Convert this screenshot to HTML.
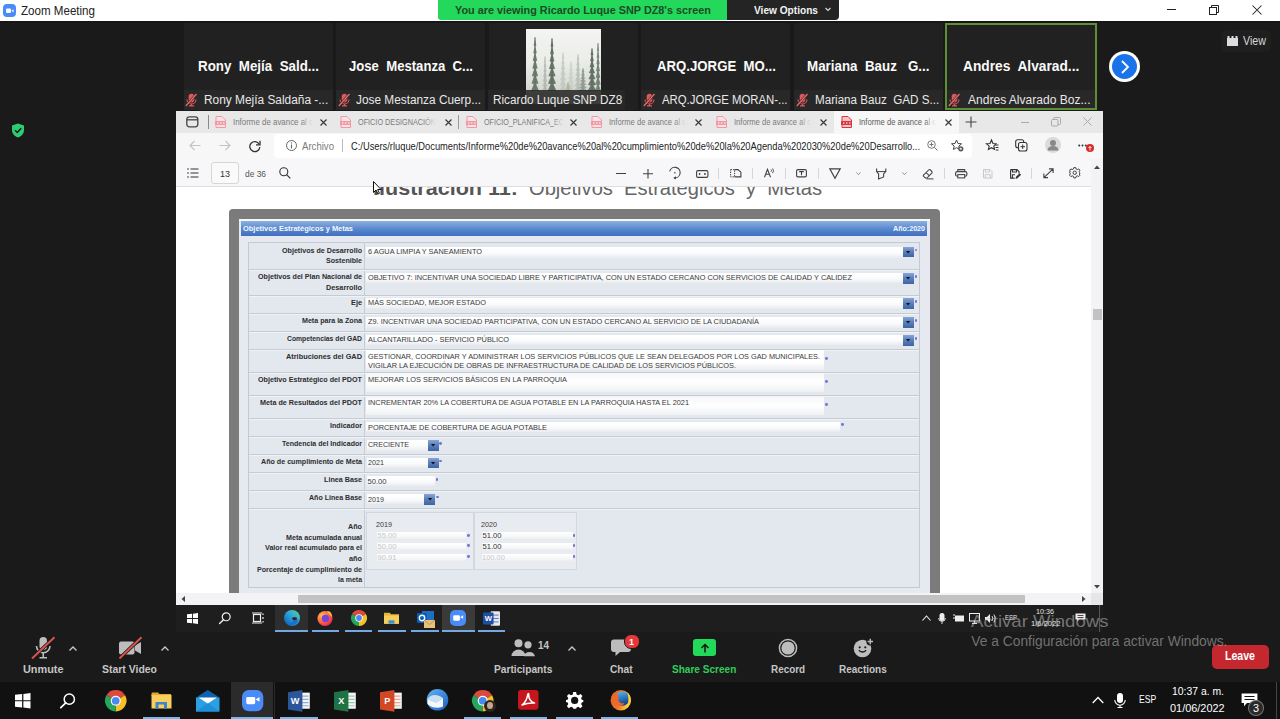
<!DOCTYPE html>
<html><head><meta charset="utf-8"><title>Zoom Meeting</title>
<style>
*{margin:0;padding:0;box-sizing:border-box}
html,body{width:1280px;height:719px;overflow:hidden;background:#1a1a1a;font-family:"Liberation Sans",sans-serif;position:relative}
.a{position:absolute}
.t{position:absolute;white-space:pre;transform-origin:0 0}
svg.a{overflow:visible}
</style></head><body>
<div class="a" style="left:0px;top:0px;width:1280px;height:21px;background:#ffffff;"></div>
<div class="a" style="left:3px;top:4px;width:13px;height:13px;background:#4a8cf7;border-radius:4px"></div>
<svg class="a" style="left:3px;top:4px;" width="13" height="13" viewBox="0 0 13 13"><rect x="3" y="4.5" width="5" height="4.5" rx="1" fill="#fff"/><path d="M8.5 6.8 L10.5 5.2 V8.4 Z" fill="#fff"/></svg>
<div class="t" style="left:21.00px;top:3.99px;font-size:13px;line-height:13px;color:#222;transform:scaleX(0.8906);">Zoom Meeting</div>
<div class="a" style="left:1166.5px;top:9.3px;width:9.5px;height:1px;background:#222;"></div>
<svg class="a" style="left:1208.5px;top:4.5px;" width="10" height="10" viewBox="0 0 10 10"><rect x="0.5" y="2.5" width="7" height="7" fill="none" stroke="#222" stroke-width="1"/><path d="M2.5 2.5 V0.5 H9.5 V7.5 H7.5" fill="none" stroke="#222" stroke-width="1"/></svg>
<svg class="a" style="left:1251.5px;top:4.5px;" width="10" height="10" viewBox="0 0 10 10"><path d="M0.5 0.5 L9.5 9.5 M9.5 0.5 L0.5 9.5" stroke="#222" stroke-width="1.05"/></svg>
<div class="a" style="left:438px;top:0px;width:289px;height:20px;background:#23d85a;border-bottom-left-radius:3px"></div>
<div class="a" style="left:727px;top:0px;width:112px;height:20px;background:#242424;border-bottom-right-radius:4px"></div>
<div class="t" style="left:455.00px;top:5.06px;font-size:11.5px;line-height:11.5px;color:#1d4a27;font-weight:bold;transform:scaleX(0.9433);">You are viewing Ricardo Luque SNP DZ8's screen</div>
<div class="t" style="left:754.00px;top:5.06px;font-size:11.5px;line-height:11.5px;color:#f2f2f2;font-weight:bold;transform:scaleX(0.8810);">View Options</div>
<svg class="a" style="left:825px;top:7px;" width="6" height="5" viewBox="0 0 6 5"><path d="M0.5 1 L3 3.5 L5.5 1" fill="none" stroke="#ddd" stroke-width="1.1"/></svg>
<div class="a" style="left:0px;top:21px;width:1280px;height:2px;background:#161616;"></div>
<div class="a" style="left:184px;top:23px;width:149px;height:87px;background:#212121;"></div>
<div class="t" style="left:197.60px;top:58.72px;font-size:14.5px;line-height:14.5px;color:#fafafa;font-weight:bold;transform:scaleX(0.9212);">Rony  Mejía  Sald...</div>
<div class="a" style="left:184px;top:90px;width:149px;height:19.6px;background:#282828;"></div>
<svg class="a" style="left:185.4px;top:92.5px;" width="13" height="14" viewBox="0 0 13 14"><rect x="3.7" y="0.8" width="5.6" height="8.6" rx="2.8" fill="#e0585a"/><path d="M2 6.5 a4.5 4.5 0 0 0 9 0" fill="none" stroke="#e0585a" stroke-width="1.1"/><path d="M6.5 11 V12.6 M4 12.8 H9" stroke="#e0585a" stroke-width="1.2"/><path d="M0.8 13 L11.5 1" stroke="#282828" stroke-width="2.4"/><path d="M0.8 13 L11.5 1" stroke="#e8706e" stroke-width="1.2"/></svg>
<div class="t" style="left:203.80px;top:94.42px;font-size:12.5px;line-height:12.5px;color:#e8e8e8;transform:scaleX(0.9508);">Rony Mejía Saldaña -...</div>
<div class="a" style="left:336px;top:23px;width:149px;height:87px;background:#212121;"></div>
<div class="t" style="left:348.70px;top:58.72px;font-size:14.5px;line-height:14.5px;color:#fafafa;font-weight:bold;transform:scaleX(0.9051);">Jose  Mestanza  C...</div>
<div class="a" style="left:336px;top:90px;width:149px;height:19.6px;background:#282828;"></div>
<svg class="a" style="left:338.0px;top:92.5px;" width="13" height="14" viewBox="0 0 13 14"><rect x="3.7" y="0.8" width="5.6" height="8.6" rx="2.8" fill="#e0585a"/><path d="M2 6.5 a4.5 4.5 0 0 0 9 0" fill="none" stroke="#e0585a" stroke-width="1.1"/><path d="M6.5 11 V12.6 M4 12.8 H9" stroke="#e0585a" stroke-width="1.2"/><path d="M0.8 13 L11.5 1" stroke="#282828" stroke-width="2.4"/><path d="M0.8 13 L11.5 1" stroke="#e8706e" stroke-width="1.2"/></svg>
<div class="t" style="left:356.20px;top:94.42px;font-size:12.5px;line-height:12.5px;color:#e8e8e8;transform:scaleX(0.9469);">Jose Mestanza Cuerp...</div>
<div class="a" style="left:489px;top:23px;width:149px;height:87px;background:#212121;"></div>
<div class="a" style="left:641px;top:23px;width:149px;height:87px;background:#212121;"></div>
<div class="t" style="left:656.50px;top:58.72px;font-size:14.5px;line-height:14.5px;color:#fafafa;font-weight:bold;transform:scaleX(0.9102);">ARQ.JORGE  MO...</div>
<div class="a" style="left:641px;top:90px;width:149px;height:19.6px;background:#282828;"></div>
<svg class="a" style="left:643.1999999999999px;top:92.5px;" width="13" height="14" viewBox="0 0 13 14"><rect x="3.7" y="0.8" width="5.6" height="8.6" rx="2.8" fill="#e0585a"/><path d="M2 6.5 a4.5 4.5 0 0 0 9 0" fill="none" stroke="#e0585a" stroke-width="1.1"/><path d="M6.5 11 V12.6 M4 12.8 H9" stroke="#e0585a" stroke-width="1.2"/><path d="M0.8 13 L11.5 1" stroke="#282828" stroke-width="2.4"/><path d="M0.8 13 L11.5 1" stroke="#e8706e" stroke-width="1.2"/></svg>
<div class="t" style="left:662.00px;top:94.42px;font-size:12.5px;line-height:12.5px;color:#e8e8e8;transform:scaleX(0.9081);">ARQ.JORGE MORAN-...</div>
<div class="a" style="left:794px;top:23px;width:149px;height:87px;background:#212121;"></div>
<div class="t" style="left:807.25px;top:58.72px;font-size:14.5px;line-height:14.5px;color:#fafafa;font-weight:bold;transform:scaleX(0.9214);">Mariana  Bauz   G...</div>
<div class="a" style="left:794px;top:90px;width:149px;height:19.6px;background:#282828;"></div>
<svg class="a" style="left:795.8px;top:92.5px;" width="13" height="14" viewBox="0 0 13 14"><rect x="3.7" y="0.8" width="5.6" height="8.6" rx="2.8" fill="#e0585a"/><path d="M2 6.5 a4.5 4.5 0 0 0 9 0" fill="none" stroke="#e0585a" stroke-width="1.1"/><path d="M6.5 11 V12.6 M4 12.8 H9" stroke="#e0585a" stroke-width="1.2"/><path d="M0.8 13 L11.5 1" stroke="#282828" stroke-width="2.4"/><path d="M0.8 13 L11.5 1" stroke="#e8706e" stroke-width="1.2"/></svg>
<div class="t" style="left:814.50px;top:94.42px;font-size:12.5px;line-height:12.5px;color:#e8e8e8;transform:scaleX(0.9311);">Mariana Bauz  GAD S...</div>
<div class="a" style="left:947px;top:23px;width:149px;height:87px;background:#212121;"></div>
<div class="t" style="left:962.95px;top:58.72px;font-size:14.5px;line-height:14.5px;color:#fafafa;font-weight:bold;transform:scaleX(0.9473);">Andres  Alvarad...</div>
<div class="a" style="left:947px;top:90px;width:149px;height:19.6px;background:#282828;"></div>
<svg class="a" style="left:948.4px;top:92.5px;" width="13" height="14" viewBox="0 0 13 14"><rect x="3.7" y="0.8" width="5.6" height="8.6" rx="2.8" fill="#e0585a"/><path d="M2 6.5 a4.5 4.5 0 0 0 9 0" fill="none" stroke="#e0585a" stroke-width="1.1"/><path d="M6.5 11 V12.6 M4 12.8 H9" stroke="#e0585a" stroke-width="1.2"/><path d="M0.8 13 L11.5 1" stroke="#282828" stroke-width="2.4"/><path d="M0.8 13 L11.5 1" stroke="#e8706e" stroke-width="1.2"/></svg>
<div class="t" style="left:967.50px;top:94.42px;font-size:12.5px;line-height:12.5px;color:#e8e8e8;transform:scaleX(0.9634);">Andres Alvarado Boz...</div>
<div class="a" style="left:526px;top:29px;width:75px;height:75px;background:linear-gradient(180deg,#f4f4f2 0%,#eceeea 40%,#d9ddd6 75%,#b9c0b5 100%);overflow:hidden"><svg width="75" height="75" viewBox="0 0 75 75"><path d="M9.0 9.0 L9.8 9.0 L9.3 9.6 L10.3 16.6 L9.4 17.2 L10.7 24.1 L9.6 24.7 L11.2 31.7 L9.8 32.3 L11.6 39.3 L9.9 39.9 L12.1 46.9 L10.1 47.5 L12.5 54.4 L10.2 55.0 L13.0 62.0 L10.4 62.6 L13.0 62 L5.0 62 L7.6 62.6 L5.0 62.0 L7.8 55.0 L5.5 54.4 L7.9 47.5 L5.9 46.9 L8.1 39.9 L6.4 39.3 L8.2 32.3 L6.8 31.7 L8.4 24.7 L7.3 24.1 L8.6 17.2 L7.7 16.6 L8.7 9.6 L8.2 9.0 Z" fill="#5d6d5e" opacity="0.85"/><path d="M9.0 8.0 V62" stroke="#5d6d5e" stroke-width="0.9" opacity="0.85"/><path d="M26.0 10.0 L26.9 10.0 L26.3 10.6 L27.4 17.4 L26.5 18.0 L27.9 24.9 L26.7 25.5 L28.4 32.3 L26.9 32.9 L29.0 39.7 L27.0 40.3 L29.5 47.1 L27.2 47.7 L30.0 54.6 L27.4 55.2 L30.5 62.0 L27.6 62.6 L30.5 62 L21.5 62 L24.4 62.6 L21.5 62.0 L24.6 55.2 L22.0 54.6 L24.8 47.7 L22.5 47.1 L25.0 40.3 L23.0 39.7 L25.1 32.9 L23.6 32.3 L25.3 25.5 L24.1 24.9 L25.5 18.0 L24.6 17.4 L25.7 10.6 L25.1 10.0 Z" fill="#566657" opacity="0.85"/><path d="M26.0 9.0 V62" stroke="#566657" stroke-width="0.9" opacity="0.85"/><path d="M19.0 28.0 L19.6 28.0 L19.2 28.6 L19.9 32.9 L19.3 33.5 L20.3 37.7 L19.4 38.3 L20.6 42.6 L19.6 43.2 L21.0 47.4 L19.7 48.0 L21.3 52.3 L19.8 52.9 L21.7 57.1 L19.9 57.7 L22.0 62.0 L20.1 62.6 L22.0 62 L16.0 62 L17.9 62.6 L16.0 62.0 L18.1 57.7 L16.3 57.1 L18.2 52.9 L16.7 52.3 L18.3 48.0 L17.0 47.4 L18.4 43.2 L17.4 42.6 L18.6 38.3 L17.7 37.7 L18.7 33.5 L18.1 32.9 L18.8 28.6 L18.4 28.0 Z" fill="#9aa59a" opacity="0.50"/><path d="M19.0 27.0 V62" stroke="#9aa59a" stroke-width="0.9" opacity="0.50"/><path d="M37.0 24.0 L37.8 24.0 L37.3 24.6 L38.3 29.4 L37.4 30.0 L38.7 34.9 L37.6 35.5 L39.2 40.3 L37.8 40.9 L39.6 45.7 L37.9 46.3 L40.1 51.1 L38.1 51.7 L40.5 56.6 L38.2 57.2 L41.0 62.0 L38.4 62.6 L41.0 62 L33.0 62 L35.6 62.6 L33.0 62.0 L35.8 57.2 L33.5 56.6 L35.9 51.7 L33.9 51.1 L36.1 46.3 L34.4 45.7 L36.2 40.9 L34.8 40.3 L36.4 35.5 L35.3 34.9 L36.6 30.0 L35.7 29.4 L36.7 24.6 L36.2 24.0 Z" fill="#b5bcb4" opacity="0.50"/><path d="M37.0 23.0 V62" stroke="#b5bcb4" stroke-width="0.9" opacity="0.50"/><path d="M45.0 33.0 L45.9 33.0 L45.3 33.6 L46.4 37.1 L45.5 37.7 L46.9 41.3 L45.7 41.9 L47.4 45.4 L45.9 46.0 L48.0 49.6 L46.0 50.2 L48.5 53.7 L46.2 54.3 L49.0 57.9 L46.4 58.5 L49.5 62.0 L46.6 62.6 L49.5 62 L40.5 62 L43.4 62.6 L40.5 62.0 L43.6 58.5 L41.0 57.9 L43.8 54.3 L41.5 53.7 L44.0 50.2 L42.0 49.6 L44.1 46.0 L42.6 45.4 L44.3 41.9 L43.1 41.3 L44.5 37.7 L43.6 37.1 L44.7 33.6 L44.1 33.0 Z" fill="#bfc5be" opacity="0.45"/><path d="M45.0 32.0 V62" stroke="#bfc5be" stroke-width="0.9" opacity="0.45"/><path d="M52.0 26.0 L52.8 26.0 L52.3 26.6 L53.3 31.1 L52.4 31.7 L53.7 36.3 L52.6 36.9 L54.2 41.4 L52.8 42.0 L54.6 46.6 L52.9 47.2 L55.1 51.7 L53.1 52.3 L55.5 56.9 L53.2 57.5 L56.0 62.0 L53.4 62.6 L56.0 62 L48.0 62 L50.6 62.6 L48.0 62.0 L50.8 57.5 L48.5 56.9 L50.9 52.3 L48.9 51.7 L51.1 47.2 L49.4 46.6 L51.2 42.0 L49.8 41.4 L51.4 36.9 L50.3 36.3 L51.6 31.7 L50.7 31.1 L51.7 26.6 L51.2 26.0 Z" fill="#a6aea6" opacity="0.50"/><path d="M52.0 25.0 V62" stroke="#a6aea6" stroke-width="0.9" opacity="0.50"/><path d="M57.0 40.0 L57.9 40.0 L57.3 40.6 L58.4 43.1 L57.5 43.7 L58.9 46.3 L57.7 46.9 L59.4 49.4 L57.9 50.0 L60.0 52.6 L58.0 53.2 L60.5 55.7 L58.2 56.3 L61.0 58.9 L58.4 59.5 L61.5 62.0 L58.6 62.6 L61.5 62 L52.5 62 L55.4 62.6 L52.5 62.0 L55.6 59.5 L53.0 58.9 L55.8 56.3 L53.5 55.7 L56.0 53.2 L54.0 52.6 L56.1 50.0 L54.6 49.4 L56.3 46.9 L55.1 46.3 L56.5 43.7 L55.6 43.1 L56.7 40.6 L56.1 40.0 Z" fill="#7f8c80" opacity="0.70"/><path d="M57.0 39.0 V62" stroke="#7f8c80" stroke-width="0.9" opacity="0.70"/><path d="M66.0 20.0 L66.9 20.0 L66.3 20.6 L67.4 26.0 L66.5 26.6 L67.9 32.0 L66.7 32.6 L68.4 38.0 L66.9 38.6 L69.0 44.0 L67.0 44.6 L69.5 50.0 L67.2 50.6 L70.0 56.0 L67.4 56.6 L70.5 62.0 L67.6 62.6 L70.5 62 L61.5 62 L64.4 62.6 L61.5 62.0 L64.6 56.6 L62.0 56.0 L64.8 50.6 L62.5 50.0 L65.0 44.6 L63.0 44.0 L65.1 38.6 L63.6 38.0 L65.3 32.6 L64.1 32.0 L65.5 26.6 L64.6 26.0 L65.7 20.6 L65.1 20.0 Z" fill="#566657" opacity="0.85"/><path d="M66.0 19.0 V62" stroke="#566657" stroke-width="0.9" opacity="0.85"/><path d="M72.0 15.0 L72.6 15.0 L72.2 15.6 L72.9 21.7 L72.3 22.3 L73.3 28.4 L72.5 29.0 L73.6 35.1 L72.6 35.7 L74.0 41.9 L72.7 42.5 L74.3 48.6 L72.8 49.2 L74.7 55.3 L72.9 55.9 L75.0 62.0 L73.0 62.6 L75.0 62 L69.0 62 L71.0 62.6 L69.0 62.0 L71.1 55.9 L69.3 55.3 L71.2 49.2 L69.7 48.6 L71.3 42.5 L70.0 41.9 L71.4 35.7 L70.4 35.1 L71.5 29.0 L70.7 28.4 L71.7 22.3 L71.1 21.7 L71.8 15.6 L71.4 15.0 Z" fill="#64736a" opacity="0.80"/><path d="M72.0 14.0 V62" stroke="#64736a" stroke-width="0.9" opacity="0.80"/><path d="M42.0 54.0 L42.8 54.0 L42.3 54.6 L43.3 55.1 L42.4 55.7 L43.7 56.3 L42.6 56.9 L44.2 57.4 L42.8 58.0 L44.6 58.6 L42.9 59.2 L45.1 59.7 L43.1 60.3 L45.5 60.9 L43.2 61.5 L46.0 62.0 L43.4 62.6 L46.0 62 L38.0 62 L40.6 62.6 L38.0 62.0 L40.8 61.5 L38.5 60.9 L40.9 60.3 L38.9 59.7 L41.1 59.2 L39.4 58.6 L41.2 58.0 L39.8 57.4 L41.4 56.9 L40.3 56.3 L41.6 55.7 L40.7 55.1 L41.7 54.6 L41.2 54.0 Z" fill="#9a9f80" opacity="0.50"/><path d="M42.0 53.0 V62" stroke="#9a9f80" stroke-width="0.9" opacity="0.50"/></svg></div>
<div class="a" style="left:488.4px;top:90px;width:137.1px;height:19.6px;background:rgba(40,40,40,0.88);"></div>
<div class="t" style="left:492.70px;top:94.42px;font-size:12.5px;line-height:12.5px;color:#e8e8e8;transform:scaleX(0.9407);">Ricardo Luque SNP DZ8</div>
<div class="a" style="left:945px;top:23px;width:152px;height:86.6px;background:transparent;border:2px solid #5f8f35"></div>
<div class="a" style="left:1109px;top:51px;width:31px;height:31px;border-radius:50%;background:#fff"></div>
<div class="a" style="left:1112px;top:54px;width:25px;height:25px;border-radius:50%;background:#1a73e8"></div>
<svg class="a" style="left:1119px;top:59px;" width="12" height="16" viewBox="0 0 12 16"><path d="M3 2 L9 8 L3 14" fill="none" stroke="#fff" stroke-width="1.8"/></svg>
<div class="a" style="left:1221px;top:30px;width:50px;height:22px;background:#1f1f1f;border-radius:6px"></div>
<svg class="a" style="left:1227px;top:36px;" width="11" height="10" viewBox="0 0 11 10"><rect x="0" y="2" width="11" height="8" fill="#ddd"/><rect x="0.5" y="0" width="2" height="2" fill="#ddd"/><rect x="4.5" y="0" width="2" height="2" fill="#ddd"/><rect x="8.5" y="0" width="2" height="2" fill="#ddd"/></svg>
<div class="t" style="left:1242.50px;top:35.34px;font-size:12px;line-height:12px;color:#d6d6d6;transform:scaleX(0.8916);">View</div>
<svg class="a" style="left:11px;top:123px;" width="14" height="15" viewBox="0 0 14 15"><path d="M7 0.5 L13 2.5 V7 C13 11 10 13.5 7 14.5 C4 13.5 1 11 1 7 V2.5 Z" fill="#2ecc71"/><path d="M4 7.3 L6.3 9.5 L10.2 5.2" fill="none" stroke="#1a1a1a" stroke-width="1.5"/></svg>
<div class="a" style="left:176px;top:111px;width:927px;height:494px;background:#ffffff;"></div>
<div class="a" style="left:176px;top:111px;width:927px;height:22px;background:#e8e8e9;"></div>
<svg class="a" style="left:186px;top:116px;" width="13" height="12" viewBox="0 0 13 12"><rect x="0.8" y="0.8" width="11" height="10" rx="2.5" fill="none" stroke="#444" stroke-width="1.3"/><path d="M1 3.8 H12" stroke="#444" stroke-width="1.3"/></svg>
<div class="a" style="left:208px;top:115px;width:1px;height:14px;background:#8a8a8a;"></div>
<svg class="a" style="left:215px;top:116px;" width="11" height="12" viewBox="0 0 11 12"><path d="M1 0.5 H7 L10.5 4 V11.5 H1 Z" fill="#fbe3e6" stroke="#ef9aa5" stroke-width="1"/><rect x="0" y="5" width="11" height="4" fill="#ef9aa5"/><path d="M2 7 h1.5 M5 7 h1.5 M8 7 h1.5" stroke="#fff" stroke-width="1"/></svg>
<div class="t" style="left:233.00px;top:116.96px;font-size:9.5px;line-height:9.5px;color:#7a7a7a;transform:scaleX(0.8324);">Informe de avance al c</div>
<div class="a" style="left:301px;top:116px;width:12px;height:12px;background:linear-gradient(90deg,rgba(232,232,233,0),#e8e8e9);"></div>
<svg class="a" style="left:320px;top:119px;" width="7" height="7" viewBox="0 0 7 7"><path d="M0.5 0.5 L6.5 6.5 M6.5 0.5 L0.5 6.5" stroke="#3a3a3a" stroke-width="1.2"/></svg>
<svg class="a" style="left:340px;top:116px;" width="11" height="12" viewBox="0 0 11 12"><path d="M1 0.5 H7 L10.5 4 V11.5 H1 Z" fill="#fbe3e6" stroke="#ef9aa5" stroke-width="1"/><rect x="0" y="5" width="11" height="4" fill="#ef9aa5"/><path d="M2 7 h1.5 M5 7 h1.5 M8 7 h1.5" stroke="#fff" stroke-width="1"/></svg>
<div class="t" style="left:358.00px;top:116.96px;font-size:9.5px;line-height:9.5px;color:#7a7a7a;transform:scaleX(0.7656);">OFICIO DESIGNACIÓN</div>
<div class="a" style="left:424px;top:116px;width:12px;height:12px;background:linear-gradient(90deg,rgba(232,232,233,0),#e8e8e9);"></div>
<svg class="a" style="left:445px;top:119px;" width="7" height="7" viewBox="0 0 7 7"><path d="M0.5 0.5 L6.5 6.5 M6.5 0.5 L0.5 6.5" stroke="#3a3a3a" stroke-width="1.2"/></svg>
<svg class="a" style="left:466px;top:116px;" width="11" height="12" viewBox="0 0 11 12"><path d="M1 0.5 H7 L10.5 4 V11.5 H1 Z" fill="#fbe3e6" stroke="#ef9aa5" stroke-width="1"/><rect x="0" y="5" width="11" height="4" fill="#ef9aa5"/><path d="M2 7 h1.5 M5 7 h1.5 M8 7 h1.5" stroke="#fff" stroke-width="1"/></svg>
<div class="t" style="left:484.00px;top:116.96px;font-size:9.5px;line-height:9.5px;color:#7a7a7a;transform:scaleX(0.7576);">OFICIO_PLANIFICA_EC</div>
<div class="a" style="left:552px;top:116px;width:12px;height:12px;background:linear-gradient(90deg,rgba(232,232,233,0),#e8e8e9);"></div>
<svg class="a" style="left:570px;top:119px;" width="7" height="7" viewBox="0 0 7 7"><path d="M0.5 0.5 L6.5 6.5 M6.5 0.5 L0.5 6.5" stroke="#3a3a3a" stroke-width="1.2"/></svg>
<svg class="a" style="left:591px;top:116px;" width="11" height="12" viewBox="0 0 11 12"><path d="M1 0.5 H7 L10.5 4 V11.5 H1 Z" fill="#fbe3e6" stroke="#ef9aa5" stroke-width="1"/><rect x="0" y="5" width="11" height="4" fill="#ef9aa5"/><path d="M2 7 h1.5 M5 7 h1.5 M8 7 h1.5" stroke="#fff" stroke-width="1"/></svg>
<div class="t" style="left:609.00px;top:116.96px;font-size:9.5px;line-height:9.5px;color:#7a7a7a;transform:scaleX(0.8012);">Informe de avance al c</div>
<div class="a" style="left:674px;top:116px;width:12px;height:12px;background:linear-gradient(90deg,rgba(232,232,233,0),#e8e8e9);"></div>
<svg class="a" style="left:695px;top:119px;" width="7" height="7" viewBox="0 0 7 7"><path d="M0.5 0.5 L6.5 6.5 M6.5 0.5 L0.5 6.5" stroke="#3a3a3a" stroke-width="1.2"/></svg>
<svg class="a" style="left:716px;top:116px;" width="11" height="12" viewBox="0 0 11 12"><path d="M1 0.5 H7 L10.5 4 V11.5 H1 Z" fill="#fbe3e6" stroke="#ef9aa5" stroke-width="1"/><rect x="0" y="5" width="11" height="4" fill="#ef9aa5"/><path d="M2 7 h1.5 M5 7 h1.5 M8 7 h1.5" stroke="#fff" stroke-width="1"/></svg>
<div class="t" style="left:734.00px;top:116.96px;font-size:9.5px;line-height:9.5px;color:#7a7a7a;transform:scaleX(0.8012);">Informe de avance al c</div>
<div class="a" style="left:799px;top:116px;width:12px;height:12px;background:linear-gradient(90deg,rgba(232,232,233,0),#e8e8e9);"></div>
<svg class="a" style="left:820px;top:119px;" width="7" height="7" viewBox="0 0 7 7"><path d="M0.5 0.5 L6.5 6.5 M6.5 0.5 L0.5 6.5" stroke="#3a3a3a" stroke-width="1.2"/></svg>
<div class="a" style="left:458px;top:115px;width:1px;height:14px;background:#9a9a9a;"></div>
<div class="a" style="left:834px;top:111px;width:125px;height:22px;background:#f7f7f7;"></div>
<svg class="a" style="left:841px;top:116px;" width="11" height="12" viewBox="0 0 11 12"><path d="M1 0.5 H7 L10.5 4 V11.5 H1 Z" fill="#f6c5c9" stroke="#d9363e" stroke-width="1"/><rect x="0" y="5" width="11" height="4" fill="#d9363e"/><path d="M2 7 h1.5 M5 7 h1.5 M8 7 h1.5" stroke="#fff" stroke-width="1"/></svg>
<div class="t" style="left:859.00px;top:116.96px;font-size:9.5px;line-height:9.5px;color:#5a5a5a;transform:scaleX(0.8012);">Informe de avance al c</div>
<div class="a" style="left:924px;top:116px;width:12px;height:12px;background:linear-gradient(90deg,rgba(247,247,247,0),#f7f7f7);"></div>
<svg class="a" style="left:945px;top:119px;" width="7" height="7" viewBox="0 0 7 7"><path d="M0.5 0.5 L6.5 6.5 M6.5 0.5 L0.5 6.5" stroke="#3a3a3a" stroke-width="1.2"/></svg>
<svg class="a" style="left:965px;top:116px;" width="12" height="12" viewBox="0 0 12 12"><path d="M6 0.5 V11.5 M0.5 6 H11.5" stroke="#444" stroke-width="1.1"/></svg>
<div class="a" style="left:1021px;top:122px;width:8px;height:1px;background:#aaa;"></div>
<svg class="a" style="left:1051px;top:117px;" width="10" height="10" viewBox="0 0 10 10"><rect x="0.5" y="2.5" width="6.5" height="6.5" rx="1" fill="none" stroke="#aaa"/><path d="M2.5 2.5 V1.5 a1 1 0 0 1 1 -1 H8.5 a1 1 0 0 1 1 1 V6.5 a1 1 0 0 1 -1 1 H7" fill="none" stroke="#aaa"/></svg>
<svg class="a" style="left:1083px;top:117px;" width="9" height="9" viewBox="0 0 9 9"><path d="M0.5 0.5 L8.5 8.5 M8.5 0.5 L0.5 8.5" stroke="#aaa" stroke-width="1"/></svg>
<div class="a" style="left:176px;top:133px;width:927px;height:26px;background:#f7f7f7;"></div>
<svg class="a" style="left:189px;top:140px;" width="12" height="11" viewBox="0 0 12 11"><path d="M11.5 5.5 H1 M5.5 1 L1 5.5 L5.5 10" fill="none" stroke="#c4c4c4" stroke-width="1.1"/></svg>
<svg class="a" style="left:219px;top:140px;" width="12" height="11" viewBox="0 0 12 11"><path d="M0.5 5.5 H11 M6.5 1 L11 5.5 L6.5 10" fill="none" stroke="#c4c4c4" stroke-width="1.1"/></svg>
<svg class="a" style="left:249px;top:140px;" width="12" height="12" viewBox="0 0 12 12"><path d="M10.2 4.2 A5 5 0 1 0 10.8 7" fill="none" stroke="#333" stroke-width="1.3"/><path d="M11 0.8 V4.8 H7" fill="none" stroke="#333" stroke-width="1.3"/></svg>
<div class="a" style="left:274px;top:134px;width:698px;height:24px;background:#ffffff;border-radius:4px"></div>
<svg class="a" style="left:286px;top:140px;" width="11" height="11" viewBox="0 0 11 11"><circle cx="5.5" cy="5.5" r="5" fill="none" stroke="#666" stroke-width="1"/><path d="M5.5 4.5 V8.5" stroke="#666" stroke-width="1.1"/><circle cx="5.5" cy="2.9" r="0.7" fill="#666"/></svg>
<div class="t" style="left:302.00px;top:140.61px;font-size:10.5px;line-height:10.5px;color:#7a7a7a;transform:scaleX(0.9139);">Archivo</div>
<div class="a" style="left:342px;top:139px;width:1px;height:13px;background:#bbb;"></div>
<div class="t" style="left:351.00px;top:140.61px;font-size:10.5px;line-height:10.5px;color:#222;transform:scaleX(0.8878);">C:/Users/rluque/Documents/Informe%20de%20avance%20al%20cumplimiento%20de%20la%20Agenda%202030%20de%20Desarrollo...</div>
<svg class="a" style="left:927px;top:140px;" width="11" height="11" viewBox="0 0 11 11"><circle cx="4.5" cy="4.5" r="3.8" fill="none" stroke="#777" stroke-width="1"/><path d="M7.3 7.3 L10.5 10.5 M4.5 2.5 V6.5 M2.5 4.5 H6.5" stroke="#777" stroke-width="1"/></svg>
<svg class="a" style="left:951px;top:139px;" width="13" height="13" viewBox="0 0 13 13"><path d="M5.5 1 L7 4.5 L10.5 4.8 L7.8 7.1 L8.6 10.5 L5.5 8.7 L2.4 10.5 L3.2 7.1 L0.5 4.8 L4 4.5 Z" fill="none" stroke="#444" stroke-width="1"/><circle cx="9.8" cy="9.8" r="2.6" fill="#555"/><path d="M9.8 8.5 V11 M8.5 9.8 H11" stroke="#fff" stroke-width="0.8"/></svg>
<svg class="a" style="left:986px;top:139px;" width="13" height="13" viewBox="0 0 13 13"><path d="M5.5 1 L7 4.5 L10 4.8 L7.8 7.1 L8.6 10.5 L5.5 8.7 L2.4 10.5 L3.2 7.1 L0.5 4.8 L4 4.5 Z" fill="none" stroke="#333" stroke-width="1.1"/><path d="M9 6 H12.5 M9.5 8.5 H12.5 M10 11 H12.5" stroke="#333" stroke-width="1"/></svg>
<svg class="a" style="left:1015px;top:139px;" width="13" height="13" viewBox="0 0 13 13"><rect x="0.7" y="0.7" width="8" height="8" rx="2" fill="none" stroke="#333" stroke-width="1.1"/><rect x="3.5" y="3.5" width="8.5" height="8.5" rx="2" fill="#f7f7f7" stroke="#333" stroke-width="1.1"/><path d="M7.7 5.5 V10 M5.5 7.7 H10" stroke="#333" stroke-width="1"/></svg>
<div class="a" style="left:1045px;top:137px;width:16px;height:16px;border-radius:50%;background:#dadada"></div>
<svg class="a" style="left:1045px;top:137px;" width="16" height="16" viewBox="0 0 16 16"><circle cx="8" cy="6" r="3" fill="#888"/><path d="M2.5 13.5 a5.5 4.5 0 0 1 11 0 Z" fill="#888"/></svg>
<svg class="a" style="left:1078px;top:144px;" width="9" height="3" viewBox="0 0 9 3"><circle cx="1.2" cy="1.5" r="1" fill="#333"/><circle cx="4.5" cy="1.5" r="1" fill="#333"/><circle cx="7.8" cy="1.5" r="1" fill="#333"/></svg>
<div class="a" style="left:1086px;top:144px;width:8px;height:8px;border-radius:50%;background:#d62b2b"></div>
<svg class="a" style="left:1086px;top:144px;" width="8" height="8" viewBox="0 0 8 8"><path d="M4 6.5 V2.5 M2.5 4 L4 2.5 L5.5 4" fill="none" stroke="#fff" stroke-width="0.9"/></svg>
<div class="a" style="left:176px;top:159px;width:927px;height:28px;background:#f7f7f9;"></div>
<div class="a" style="left:176px;top:186px;width:915px;height:1px;background:#dedede;"></div>
<svg class="a" style="left:187px;top:168px;" width="12" height="10" viewBox="0 0 12 10"><path d="M3.5 1 H11.5 M3.5 5 H11.5 M3.5 9 H11.5" stroke="#333" stroke-width="1.1"/><circle cx="1" cy="1" r="0.8" fill="#333"/><circle cx="1" cy="5" r="0.8" fill="#333"/><circle cx="1" cy="9" r="0.8" fill="#333"/></svg>
<div class="a" style="left:211px;top:162px;width:28px;height:22px;background:#fafafa;border:1px solid #d6d6d6;border-radius:3px"></div>
<div class="t" style="left:220.00px;top:168.96px;font-size:9.5px;line-height:9.5px;color:#333;transform:scaleX(0.9453);">13</div>
<div class="t" style="left:245.00px;top:168.96px;font-size:9.5px;line-height:9.5px;color:#555;transform:scaleX(0.8830);">de 36</div>
<svg class="a" style="left:279px;top:167px;" width="12" height="12" viewBox="0 0 12 12"><circle cx="4.8" cy="4.8" r="4" fill="none" stroke="#333" stroke-width="1.1"/><path d="M7.8 7.8 L11.3 11.3" stroke="#333" stroke-width="1.2"/></svg>
<div class="a" style="left:615.5px;top:172.5px;width:10px;height:1.1px;background:#404040;"></div>
<svg class="a" style="left:642.5px;top:168.5px;" width="10" height="9.5" viewBox="0 0 10 9.5"><path d="M5 0 V9.5 M0 4.75 H10" stroke="#404040" stroke-width="1.1"/></svg>
<svg class="a" style="left:669px;top:167px;" width="12" height="13" viewBox="0 0 12 13"><path d="M0.7 4.3 A5.3 5.3 0 1 1 5.6 10.9" fill="none" stroke="#404040" stroke-width="1.1"/><path d="M4.2 10.9 L6.9 9.2 L6.7 12.6 Z" fill="#404040"/><circle cx="5.8" cy="5.7" r="1" fill="#888"/></svg>
<svg class="a" style="left:696px;top:169.5px;" width="12.5" height="8" viewBox="0 0 12.5 8"><rect x="0.6" y="0.6" width="11.3" height="6.8" rx="1.3" fill="none" stroke="#404040" stroke-width="1.1"/><circle cx="3.6" cy="4" r="0.9" fill="#404040"/><circle cx="8.9" cy="4" r="0.9" fill="#404040"/></svg>
<div class="a" style="left:718px;top:168px;width:1px;height:11px;background:#d6d6d8;"></div>
<svg class="a" style="left:729.5px;top:168.5px;" width="11.5" height="8.5" viewBox="0 0 11.5 8.5"><path d="M0.6 0.6 H4.6 V7.9 H0.6 Z" fill="none" stroke="#404040" stroke-dasharray="1.4 1" stroke-width="1"/><path d="M4.6 0.6 H8 L10.9 3.2 V7.9 H4.6" fill="none" stroke="#404040" stroke-width="1.1"/></svg>
<div class="a" style="left:752px;top:168px;width:1px;height:11px;background:#d6d6d8;"></div>
<svg class="a" style="left:763.5px;top:167.5px;" width="10.5" height="9.5" viewBox="0 0 10.5 9.5"><path d="M0.5 9.3 L3.5 1.2 L6.5 9.3 M1.7 6.3 H5.3" fill="none" stroke="#404040" stroke-width="1.05"/><path d="M7 1.5 q1 1 0 2.2 M8.6 0.5 q1.8 2.2 0 4.6" fill="none" stroke="#404040" stroke-width="0.9"/></svg>
<div class="a" style="left:785px;top:168px;width:1px;height:11px;background:#d6d6d8;"></div>
<svg class="a" style="left:796px;top:168.5px;" width="11" height="8.5" viewBox="0 0 11 8.5"><rect x="0.6" y="0.6" width="9.8" height="7.3" rx="1.3" fill="none" stroke="#404040" stroke-width="1.1"/><path d="M3.2 2.6 H7.8 M5.5 2.6 V6.3" stroke="#404040" stroke-width="1.1"/></svg>
<div class="a" style="left:818px;top:168px;width:1px;height:11px;background:#d6d6d8;"></div>
<svg class="a" style="left:829px;top:168px;" width="12" height="11" viewBox="0 0 12 11"><path d="M0.8 0.8 H11.2 L6 10.3 Z" fill="none" stroke="#404040" stroke-width="1.15"/></svg>
<svg class="a" style="left:855.5px;top:171.5px;" width="5" height="3.5" viewBox="0 0 5 3.5"><path d="M0.4 0.4 L2.5 2.7 L4.6 0.4" fill="none" stroke="#8a8a8a" stroke-width="0.9"/></svg>
<svg class="a" style="left:875.5px;top:167.5px;" width="10.5" height="11.5" viewBox="0 0 10.5 11.5"><path d="M0.6 0.4 V3.6 L2.6 6 V11 L7.6 9 V6 L9.8 3.6 V0.4" fill="none" stroke="#404040" stroke-width="1.1"/><path d="M0.6 3.6 H9.8" stroke="#404040" stroke-width="1"/></svg>
<svg class="a" style="left:902px;top:171.5px;" width="5" height="3.5" viewBox="0 0 5 3.5"><path d="M0.4 0.4 L2.5 2.7 L4.6 0.4" fill="none" stroke="#8a8a8a" stroke-width="0.9"/></svg>
<svg class="a" style="left:921.5px;top:167.5px;" width="12" height="11.5" viewBox="0 0 12 11.5"><path d="M1.8 6.8 L6.6 2 a1.3 1.3 0 0 1 1.8 0 L9.8 3.4 a1.3 1.3 0 0 1 0 1.8 L5 10 H3.4 L1.6 8.4 a1 1 0 0 1 0.2 -1.6 Z M4 4.5 L7.2 7.7" fill="none" stroke="#404040" stroke-width="1.05"/><path d="M4.5 10.9 H11.5" stroke="#404040" stroke-width="1"/></svg>
<div class="a" style="left:944px;top:168px;width:1px;height:11px;background:#d6d6d8;"></div>
<svg class="a" style="left:954.5px;top:168.5px;" width="12.5" height="9.5" viewBox="0 0 12.5 9.5"><path d="M2.8 2.6 V0.6 H9.7 V2.6" fill="none" stroke="#404040" stroke-width="1.05"/><rect x="0.6" y="2.6" width="11.3" height="4.6" rx="1.8" fill="none" stroke="#404040" stroke-width="1.15"/><rect x="2.8" y="5.6" width="6.9" height="3.3" fill="#f7f7f9" stroke="#404040" stroke-width="1.05"/></svg>
<svg class="a" style="left:983px;top:168.5px;" width="9.5" height="9.5" viewBox="0 0 9.5 9.5"><path d="M0.5 0.5 H7 L9 2.5 V9 H0.5 Z M2.3 0.5 V3 H6.5 V0.5 M2.3 9 V5.6 H7.2 V9" fill="none" stroke="#c9c9cb" stroke-width="1"/></svg>
<svg class="a" style="left:1009.5px;top:168.5px;" width="11.5" height="10" viewBox="0 0 11.5 10"><path d="M0.6 0.6 H7 L9 2.6 V4.5 M4.6 9.1 H0.6 V0.6 M2.4 0.6 V3 H6.5 V0.6 M2.4 9.1 V5.8 H5" fill="none" stroke="#333" stroke-width="1.1"/><path d="M5.5 10 L6 7.8 L9.6 4.2 L11.1 5.7 L7.5 9.3 Z" fill="#333"/></svg>
<div class="a" style="left:1031px;top:168px;width:1px;height:11px;background:#d6d6d8;"></div>
<svg class="a" style="left:1042.5px;top:168px;" width="11" height="10.5" viewBox="0 0 11 10.5"><path d="M0.9 9.6 L10.1 0.9 M6 0.9 H10.1 V5 M0.9 5.5 V9.6 H5" fill="none" stroke="#404040" stroke-width="1.1"/></svg>
<svg class="a" style="left:1069px;top:167px;" width="11.5" height="11.5" viewBox="0 0 11.5 11.5"><circle cx="5.75" cy="5.75" r="1.7" fill="none" stroke="#404040" stroke-width="1"/><path d="M4.8 0.6 H6.7 L7.1 2 L8.3 2.6 L9.7 1.9 L10.9 3.2 L10.2 4.6 L10.7 5.8 L10.9 6.7 L10.2 7 L10.9 8.3 L9.6 9.6 L8.3 8.8 L7.1 9.4 L6.7 10.9 H4.8 L4.4 9.4 L3.2 8.8 L1.9 9.6 L0.6 8.3 L1.3 6.9 L0.8 5.8 L0.6 4.8 L1.3 4.6 L0.6 3.2 L1.9 1.9 L3.2 2.6 L4.4 2 Z" fill="none" stroke="#404040" stroke-width="1" stroke-linejoin="round"/></svg>
<div class="a" style="left:1091px;top:159px;width:12px;height:446px;background:#f3f3f5;"></div>
<svg class="a" style="left:1094px;top:165px;" width="6" height="4" viewBox="0 0 6 4"><path d="M0 4 L3 0.5 L6 4 Z" fill="#444"/></svg>
<div class="a" style="left:1093px;top:309px;width:9px;height:11px;background:#c2c2c2;"></div>
<svg class="a" style="left:1094px;top:585px;" width="6" height="4" viewBox="0 0 6 4"><path d="M0 0 L3 3.5 L6 0 Z" fill="#444"/></svg>
<div class="a" style="left:176px;top:593px;width:915px;height:12px;background:#f3f3f5;"></div>
<svg class="a" style="left:181px;top:596px;" width="4" height="6" viewBox="0 0 4 6"><path d="M4 0 L0.5 3 L4 6 Z" fill="#444"/></svg>
<div class="a" style="left:298px;top:595px;width:727px;height:8px;background:#c2c2c2;border-radius:1px"></div>
<svg class="a" style="left:1082px;top:596px;" width="4" height="6" viewBox="0 0 4 6"><path d="M0 0 L3.5 3 L0 6 Z" fill="#444"/></svg>
<div class="a" style="left:1091px;top:593px;width:12px;height:12px;background:#e6e6e8;"></div>
<div class="a" style="left:176px;top:187px;width:915px;height:21px;overflow:hidden">
<div class="t" style="left:197.00px;top:-9.23px;font-size:20px;line-height:20px;color:#555555;font-weight:bold;transform:scaleX(1.0781);">Ilustración 11:</div>
<div class="t" style="left:353.00px;top:-9.33px;font-size:20px;line-height:20px;color:#666666;transform:scaleX(1.0061);">Objetivos  Estratégicos  y  Metas</div>
</div>
<svg class="a" style="left:373px;top:181px;" width="9" height="14" viewBox="0 0 9 14"><path d="M0.5 0.5 V11.5 L3 9 L5 13 L6.5 12.3 L4.6 8.5 H8 Z" fill="#fff" stroke="#111" stroke-width="1"/></svg>
<div class="a" style="left:229px;top:209px;width:711px;height:384px;background:#7b7b7b;border-radius:4px 4px 0 0"></div>
<div class="a" style="left:239px;top:219px;width:691px;height:374px;background:#e6e9ef;"></div>
<div class="a" style="left:239px;top:219px;width:691px;height:2px;background:#f6f7f9;"></div>
<div class="a" style="left:241px;top:221px;width:686px;height:15px;background:linear-gradient(180deg,#8db1df 0%,#5b8ad0 50%,#3f6fbf 100%);"></div>
<div class="t" style="left:243.00px;top:224.85px;font-size:7.5px;line-height:7.5px;color:#f4f7fc;font-weight:bold;transform:scaleX(0.9921);">Objetivos Estratégicos y Metas</div>
<div class="t" style="left:893.00px;top:224.85px;font-size:7.5px;line-height:7.5px;color:#f4f7fc;font-weight:bold;transform:scaleX(0.9477);">Año:2020</div>
<div class="a" style="left:248px;top:242px;width:672px;height:346px;background:#e3e7ee;border:1px solid #c3c8d1"></div>
<div class="a" style="left:364px;top:242px;width:1px;height:346px;background:#c8ccd4;"></div>
<div class="a" style="left:249px;top:269px;width:670px;height:1px;background:#c6cad2;"></div>
<div class="a" style="left:249px;top:270px;width:670px;height:1px;background:#f0f2f6;"></div>
<div class="a" style="left:249px;top:295px;width:670px;height:1px;background:#c6cad2;"></div>
<div class="a" style="left:249px;top:296px;width:670px;height:1px;background:#f0f2f6;"></div>
<div class="a" style="left:249px;top:313px;width:670px;height:1px;background:#c6cad2;"></div>
<div class="a" style="left:249px;top:314px;width:670px;height:1px;background:#f0f2f6;"></div>
<div class="a" style="left:249px;top:331px;width:670px;height:1px;background:#c6cad2;"></div>
<div class="a" style="left:249px;top:332px;width:670px;height:1px;background:#f0f2f6;"></div>
<div class="a" style="left:249px;top:349px;width:670px;height:1px;background:#c6cad2;"></div>
<div class="a" style="left:249px;top:350px;width:670px;height:1px;background:#f0f2f6;"></div>
<div class="a" style="left:249px;top:372px;width:670px;height:1px;background:#c6cad2;"></div>
<div class="a" style="left:249px;top:373px;width:670px;height:1px;background:#f0f2f6;"></div>
<div class="a" style="left:249px;top:395px;width:670px;height:1px;background:#c6cad2;"></div>
<div class="a" style="left:249px;top:396px;width:670px;height:1px;background:#f0f2f6;"></div>
<div class="a" style="left:249px;top:418px;width:670px;height:1px;background:#c6cad2;"></div>
<div class="a" style="left:249px;top:419px;width:670px;height:1px;background:#f0f2f6;"></div>
<div class="a" style="left:249px;top:436px;width:670px;height:1px;background:#c6cad2;"></div>
<div class="a" style="left:249px;top:437px;width:670px;height:1px;background:#f0f2f6;"></div>
<div class="a" style="left:249px;top:454px;width:670px;height:1px;background:#c6cad2;"></div>
<div class="a" style="left:249px;top:455px;width:670px;height:1px;background:#f0f2f6;"></div>
<div class="a" style="left:249px;top:472px;width:670px;height:1px;background:#c6cad2;"></div>
<div class="a" style="left:249px;top:473px;width:670px;height:1px;background:#f0f2f6;"></div>
<div class="a" style="left:249px;top:490px;width:670px;height:1px;background:#c6cad2;"></div>
<div class="a" style="left:249px;top:491px;width:670px;height:1px;background:#f0f2f6;"></div>
<div class="a" style="left:249px;top:508px;width:670px;height:1px;background:#c6cad2;"></div>
<div class="a" style="left:249px;top:509px;width:670px;height:1px;background:#f0f2f6;"></div>
<div class="t" style="left:282.30px;top:246.97px;font-size:7.6px;line-height:7.6px;color:#2d2d2d;font-weight:bold;transform:scaleX(0.9384);">Objetivos de Desarrollo</div>
<div class="t" style="left:326.30px;top:257.17px;font-size:7.6px;line-height:7.6px;color:#2d2d2d;font-weight:bold;transform:scaleX(0.9373);">Sostenible</div>
<div class="a" style="left:366px;top:246.5px;width:537px;height:11.0px;background:linear-gradient(180deg,#ffffff 0%,#fafbfc 55%,#e9ebef 100%);"></div>
<div class="t" style="left:367.50px;top:247.87px;font-size:7.6px;line-height:7.6px;color:#3a3a3a;transform:scaleX(0.9682);">6 AGUA LIMPIA Y SANEAMIENTO</div>
<div class="a" style="left:903px;top:246.8px;width:10.5px;height:10.5px;background:linear-gradient(180deg,#86a6d6 0%,#5b80bd 45%,#3f64a3 100%);"></div>
<svg class="a" style="left:906.2px;top:251.10000000000002px;" width="4.2" height="2.6" viewBox="0 0 4.2 2.6"><path d="M0 0 H4.2 L2.1 2.6 Z" fill="#111"/></svg>
<div class="a" style="left:914.6px;top:248.6px;width:2.8px;height:2.8px;border-radius:50%;background:#7a72d2"></div>
<div class="t" style="left:258.30px;top:273.17px;font-size:7.6px;line-height:7.6px;color:#2d2d2d;font-weight:bold;transform:scaleX(0.9406);">Objetivos del Plan Nacional de</div>
<div class="t" style="left:326.30px;top:283.57px;font-size:7.6px;line-height:7.6px;color:#2d2d2d;font-weight:bold;transform:scaleX(0.9584);">Desarrollo</div>
<div class="a" style="left:366px;top:272.7px;width:537px;height:10.800000000000011px;background:linear-gradient(180deg,#ffffff 0%,#fafbfc 55%,#e9ebef 100%);"></div>
<div class="t" style="left:367.50px;top:274.07px;font-size:7.6px;line-height:7.6px;color:#3a3a3a;transform:scaleX(0.9704);">OBJETIVO 7: INCENTIVAR UNA SOCIEDAD LIBRE Y PARTICIPATIVA, CON UN ESTADO CERCANO CON SERVICIOS DE CALIDAD Y CALIDEZ</div>
<div class="a" style="left:903px;top:273px;width:10.5px;height:10.5px;background:linear-gradient(180deg,#86a6d6 0%,#5b80bd 45%,#3f64a3 100%);"></div>
<svg class="a" style="left:906.2px;top:277.3px;" width="4.2" height="2.6" viewBox="0 0 4.2 2.6"><path d="M0 0 H4.2 L2.1 2.6 Z" fill="#111"/></svg>
<div class="a" style="left:914.6px;top:275.1px;width:2.8px;height:2.8px;border-radius:50%;background:#7a72d2"></div>
<div class="t" style="left:351.30px;top:298.57px;font-size:7.6px;line-height:7.6px;color:#2d2d2d;font-weight:bold;transform:scaleX(0.9644);">Eje</div>
<div class="a" style="left:366px;top:298.4px;width:537px;height:10.400000000000034px;background:linear-gradient(180deg,#ffffff 0%,#fafbfc 55%,#e9ebef 100%);"></div>
<div class="t" style="left:367.50px;top:299.47px;font-size:7.6px;line-height:7.6px;color:#3a3a3a;transform:scaleX(0.9688);">MÁS SOCIEDAD, MEJOR ESTADO</div>
<div class="a" style="left:903px;top:298.4px;width:10.5px;height:10.5px;background:linear-gradient(180deg,#86a6d6 0%,#5b80bd 45%,#3f64a3 100%);"></div>
<svg class="a" style="left:906.2px;top:302.7px;" width="4.2" height="2.6" viewBox="0 0 4.2 2.6"><path d="M0 0 H4.2 L2.1 2.6 Z" fill="#111"/></svg>
<div class="a" style="left:914.6px;top:300.1px;width:2.8px;height:2.8px;border-radius:50%;background:#7a72d2"></div>
<div class="t" style="left:302.30px;top:316.87px;font-size:7.6px;line-height:7.6px;color:#2d2d2d;font-weight:bold;transform:scaleX(0.9352);">Meta para la Zona</div>
<div class="a" style="left:366px;top:317px;width:537px;height:10.600000000000023px;background:linear-gradient(180deg,#ffffff 0%,#fafbfc 55%,#e9ebef 100%);"></div>
<div class="t" style="left:367.50px;top:318.07px;font-size:7.6px;line-height:7.6px;color:#3a3a3a;transform:scaleX(0.9696);">Z9. INCENTIVAR UNA SOCIEDAD PARTICIPATIVA, CON UN ESTADO CERCANO AL SERVICIO DE LA CIUDADANÍA</div>
<div class="a" style="left:903px;top:317px;width:10.5px;height:10.5px;background:linear-gradient(180deg,#86a6d6 0%,#5b80bd 45%,#3f64a3 100%);"></div>
<svg class="a" style="left:906.2px;top:321.3px;" width="4.2" height="2.6" viewBox="0 0 4.2 2.6"><path d="M0 0 H4.2 L2.1 2.6 Z" fill="#111"/></svg>
<div class="a" style="left:914.6px;top:319.1px;width:2.8px;height:2.8px;border-radius:50%;background:#7a72d2"></div>
<div class="t" style="left:287.30px;top:334.77px;font-size:7.6px;line-height:7.6px;color:#2d2d2d;font-weight:bold;transform:scaleX(0.8930);">Competencias del GAD</div>
<div class="a" style="left:366px;top:334.8px;width:537px;height:10.599999999999966px;background:linear-gradient(180deg,#ffffff 0%,#fafbfc 55%,#e9ebef 100%);"></div>
<div class="t" style="left:367.50px;top:335.87px;font-size:7.6px;line-height:7.6px;color:#3a3a3a;transform:scaleX(0.9703);">ALCANTARILLADO - SERVICIO PÚBLICO</div>
<div class="a" style="left:903px;top:335px;width:10.5px;height:10.5px;background:linear-gradient(180deg,#86a6d6 0%,#5b80bd 45%,#3f64a3 100%);"></div>
<svg class="a" style="left:906.2px;top:339.3px;" width="4.2" height="2.6" viewBox="0 0 4.2 2.6"><path d="M0 0 H4.2 L2.1 2.6 Z" fill="#111"/></svg>
<div class="a" style="left:914.6px;top:337.1px;width:2.8px;height:2.8px;border-radius:50%;background:#7a72d2"></div>
<div class="t" style="left:286.30px;top:352.97px;font-size:7.6px;line-height:7.6px;color:#2d2d2d;font-weight:bold;transform:scaleX(0.9683);">Atribuciones del GAD</div>
<div class="a" style="left:366px;top:350.3px;width:458px;height:19.69999999999999px;background:linear-gradient(180deg,#ffffff 0%,#fafbfc 55%,#e9ebef 100%);"></div>
<div class="a" style="left:366px;top:350.3px;width:458px;height:19.7px;background:linear-gradient(180deg,#ffffff 60%,#eceef2 100%);"></div>
<div class="t" style="left:367.50px;top:352.87px;font-size:7.6px;line-height:7.6px;color:#3a3a3a;transform:scaleX(0.9635);">GESTIONAR, COORDINAR Y ADMINISTRAR LOS SERVICIOS PÚBLICOS QUE LE SEAN DELEGADOS POR LOS GAD MUNICIPALES.</div>
<div class="t" style="left:367.50px;top:361.67px;font-size:7.6px;line-height:7.6px;color:#3a3a3a;transform:scaleX(0.9661);">VIGILAR LA EJECUCIÓN DE OBRAS DE INFRAESTRUCTURA DE CALIDAD DE LOS SERVICIOS PÚBLICOS.</div>
<div class="a" style="left:825.3000000000001px;top:356.8px;width:2.8px;height:2.8px;border-radius:50%;background:#7a72d2"></div>
<div class="t" style="left:258.30px;top:376.17px;font-size:7.6px;line-height:7.6px;color:#2d2d2d;font-weight:bold;transform:scaleX(0.9442);">Objetivo Estratégico del PDOT</div>
<div class="a" style="left:366px;top:373.4px;width:458px;height:18.6px;background:linear-gradient(180deg,#f6f7f9 0%,#ffffff 50%,#eef0f3 100%);"></div>
<div class="t" style="left:367.50px;top:376.07px;font-size:7.6px;line-height:7.6px;color:#3a3a3a;transform:scaleX(0.9736);">MEJORAR LOS SERVICIOS BÁSICOS EN LA PARROQUIA</div>
<div class="a" style="left:825.3000000000001px;top:379.90000000000003px;width:2.8px;height:2.8px;border-radius:50%;background:#7a72d2"></div>
<div class="t" style="left:260.30px;top:399.27px;font-size:7.6px;line-height:7.6px;color:#2d2d2d;font-weight:bold;transform:scaleX(0.9479);">Meta de Resultados del PDOT</div>
<div class="a" style="left:366px;top:396.5px;width:458px;height:18.5px;background:linear-gradient(180deg,#f6f7f9 0%,#ffffff 50%,#eef0f3 100%);"></div>
<div class="t" style="left:367.50px;top:398.87px;font-size:7.6px;line-height:7.6px;color:#3a3a3a;transform:scaleX(0.9681);">INCREMENTAR 20% LA COBERTURA DE AGUA POTABLE EN LA PARROQUIA HASTA EL 2021</div>
<div class="a" style="left:825.3000000000001px;top:402.90000000000003px;width:2.8px;height:2.8px;border-radius:50%;background:#7a72d2"></div>
<div class="t" style="left:330.30px;top:421.77px;font-size:7.6px;line-height:7.6px;color:#2d2d2d;font-weight:bold;transform:scaleX(0.9360);">Indicador</div>
<div class="a" style="left:366px;top:422.3px;width:474px;height:9.899999999999977px;background:linear-gradient(180deg,#ffffff 0%,#fafbfc 55%,#e9ebef 100%);"></div>
<div class="t" style="left:367.50px;top:423.67px;font-size:7.6px;line-height:7.6px;color:#3a3a3a;transform:scaleX(0.9707);">PORCENTAJE DE COBERTURA DE AGUA POTABLE</div>
<div class="a" style="left:841.1px;top:423.3px;width:2.8px;height:2.8px;border-radius:50%;background:#7a72d2"></div>
<div class="t" style="left:282.30px;top:439.87px;font-size:7.6px;line-height:7.6px;color:#2d2d2d;font-weight:bold;transform:scaleX(0.9262);">Tendencia del Indicador</div>
<div class="a" style="left:366.5px;top:440px;width:61.5px;height:10.699999999999989px;background:linear-gradient(180deg,#ffffff 0%,#fafbfc 55%,#e9ebef 100%);"></div>
<div class="t" style="left:367.50px;top:441.37px;font-size:7.6px;line-height:7.6px;color:#3a3a3a;transform:scaleX(0.9341);">CRECIENTE</div>
<div class="a" style="left:428px;top:440px;width:10.5px;height:10.5px;background:linear-gradient(180deg,#86a6d6 0%,#5b80bd 45%,#3f64a3 100%);"></div>
<svg class="a" style="left:431.2px;top:444.3px;" width="4.2" height="2.6" viewBox="0 0 4.2 2.6"><path d="M0 0 H4.2 L2.1 2.6 Z" fill="#111"/></svg>
<div class="a" style="left:439.1px;top:442.20000000000005px;width:2.8px;height:2.8px;border-radius:50%;background:#7a72d2"></div>
<div class="t" style="left:261.30px;top:457.87px;font-size:7.6px;line-height:7.6px;color:#2d2d2d;font-weight:bold;transform:scaleX(0.9387);">Año de cumplimiento de Meta</div>
<div class="a" style="left:366.5px;top:457.8px;width:61.5px;height:10.599999999999966px;background:linear-gradient(180deg,#ffffff 0%,#fafbfc 55%,#e9ebef 100%);"></div>
<div class="t" style="left:367.50px;top:459.27px;font-size:7.6px;line-height:7.6px;color:#3a3a3a;transform:scaleX(0.9464);">2021</div>
<div class="a" style="left:428px;top:457.8px;width:10.5px;height:10.5px;background:linear-gradient(180deg,#86a6d6 0%,#5b80bd 45%,#3f64a3 100%);"></div>
<svg class="a" style="left:431.2px;top:462.1px;" width="4.2" height="2.6" viewBox="0 0 4.2 2.6"><path d="M0 0 H4.2 L2.1 2.6 Z" fill="#111"/></svg>
<div class="a" style="left:439.1px;top:459.6px;width:2.8px;height:2.8px;border-radius:50%;background:#7a72d2"></div>
<div class="t" style="left:324.30px;top:475.77px;font-size:7.6px;line-height:7.6px;color:#2d2d2d;font-weight:bold;transform:scaleX(0.9474);">Linea Base</div>
<div class="a" style="left:366.5px;top:476px;width:68.0px;height:10.100000000000023px;background:linear-gradient(180deg,#ffffff 0%,#fafbfc 55%,#e9ebef 100%);"></div>
<div class="t" style="left:367.50px;top:477.57px;font-size:7.6px;line-height:7.6px;color:#3a3a3a;">50.00</div>
<div class="a" style="left:435.6px;top:478.20000000000005px;width:2.8px;height:2.8px;border-radius:50%;background:#7a72d2"></div>
<div class="t" style="left:309.30px;top:493.77px;font-size:7.6px;line-height:7.6px;color:#2d2d2d;font-weight:bold;transform:scaleX(0.9303);">Año Linea Base</div>
<div class="a" style="left:366.5px;top:493.8px;width:57.89999999999998px;height:10.699999999999989px;background:linear-gradient(180deg,#ffffff 0%,#fafbfc 55%,#e9ebef 100%);"></div>
<div class="t" style="left:367.50px;top:495.57px;font-size:7.6px;line-height:7.6px;color:#3a3a3a;transform:scaleX(0.9464);">2019</div>
<div class="a" style="left:424.4px;top:494px;width:10.5px;height:10.5px;background:linear-gradient(180deg,#86a6d6 0%,#5b80bd 45%,#3f64a3 100%);"></div>
<svg class="a" style="left:427.59999999999997px;top:498.3px;" width="4.2" height="2.6" viewBox="0 0 4.2 2.6"><path d="M0 0 H4.2 L2.1 2.6 Z" fill="#111"/></svg>
<div class="a" style="left:436.3px;top:495.6px;width:2.8px;height:2.8px;border-radius:50%;background:#7a72d2"></div>
<div class="t" style="left:348.30px;top:522.87px;font-size:7.6px;line-height:7.6px;color:#2d2d2d;font-weight:bold;transform:scaleX(0.9481);">Año</div>
<div class="t" style="left:286.30px;top:533.77px;font-size:7.6px;line-height:7.6px;color:#2d2d2d;font-weight:bold;transform:scaleX(0.9379);">Meta acumulada anual</div>
<div class="t" style="left:265.30px;top:544.47px;font-size:7.6px;line-height:7.6px;color:#2d2d2d;font-weight:bold;transform:scaleX(0.9419);">Valor real acumulado para el</div>
<div class="t" style="left:349.30px;top:555.17px;font-size:7.6px;line-height:7.6px;color:#2d2d2d;font-weight:bold;transform:scaleX(0.9618);">año</div>
<div class="t" style="left:257.30px;top:565.77px;font-size:7.6px;line-height:7.6px;color:#2d2d2d;font-weight:bold;transform:scaleX(0.9354);">Porcentaje de cumplimiento de</div>
<div class="t" style="left:338.30px;top:576.37px;font-size:7.6px;line-height:7.6px;color:#2d2d2d;font-weight:bold;transform:scaleX(0.9170);">la meta</div>
<div class="a" style="left:366px;top:512.3px;width:107.5px;height:57.7px;background:#e8ebf0;border:1px solid #d4d7dd"></div>
<div class="t" style="left:376.30px;top:521.17px;font-size:7.6px;line-height:7.6px;color:#3a3a3a;transform:scaleX(0.9464);">2019</div>
<div class="a" style="left:376.8px;top:532.2px;width:89.69999999999999px;height:8px;background:linear-gradient(180deg,#ffffff 0%,#f6f7f9 60%,#e6e8ec 100%);"></div>
<div class="t" style="left:377.50px;top:532.37px;font-size:7.6px;line-height:7.6px;color:#c8c8c8;">55.00</div>
<div class="a" style="left:467.1px;top:533.8000000000001px;width:2.8px;height:2.8px;border-radius:50%;background:#7a72d2"></div>
<div class="a" style="left:376.8px;top:542.8px;width:89.69999999999999px;height:8px;background:linear-gradient(180deg,#ffffff 0%,#f6f7f9 60%,#e6e8ec 100%);"></div>
<div class="t" style="left:377.50px;top:542.97px;font-size:7.6px;line-height:7.6px;color:#c8c8c8;">50.00</div>
<div class="a" style="left:467.1px;top:544.4px;width:2.8px;height:2.8px;border-radius:50%;background:#7a72d2"></div>
<div class="a" style="left:376.8px;top:553.5px;width:89.69999999999999px;height:8px;background:linear-gradient(180deg,#ffffff 0%,#f6f7f9 60%,#e6e8ec 100%);"></div>
<div class="t" style="left:377.50px;top:553.67px;font-size:7.6px;line-height:7.6px;color:#c8c8c8;">90.91</div>
<div class="a" style="left:467.1px;top:555.1px;width:2.8px;height:2.8px;border-radius:50%;background:#7a72d2"></div>
<div class="a" style="left:473.8px;top:512.3px;width:103.6px;height:57.7px;background:#e8ebf0;border:1px solid #d4d7dd"></div>
<div class="t" style="left:481.25px;top:521.17px;font-size:7.6px;line-height:7.6px;color:#3a3a3a;transform:scaleX(0.9464);">2020</div>
<div class="a" style="left:481.75px;top:532.2px;width:90.75px;height:8px;background:linear-gradient(180deg,#ffffff 0%,#f6f7f9 60%,#e6e8ec 100%);"></div>
<div class="t" style="left:482.45px;top:532.37px;font-size:7.6px;line-height:7.6px;color:#333;">51.00</div>
<div class="a" style="left:572.6px;top:533.8000000000001px;width:2.8px;height:2.8px;border-radius:50%;background:#7a72d2"></div>
<div class="a" style="left:481.75px;top:542.8px;width:90.75px;height:8px;background:linear-gradient(180deg,#ffffff 0%,#f6f7f9 60%,#e6e8ec 100%);"></div>
<div class="t" style="left:482.45px;top:542.97px;font-size:7.6px;line-height:7.6px;color:#333;">51.00</div>
<div class="a" style="left:572.6px;top:544.4px;width:2.8px;height:2.8px;border-radius:50%;background:#7a72d2"></div>
<div class="a" style="left:481.75px;top:553.5px;width:90.75px;height:8px;background:linear-gradient(180deg,#ffffff 0%,#f6f7f9 60%,#e6e8ec 100%);"></div>
<div class="t" style="left:482.45px;top:553.67px;font-size:7.6px;line-height:7.6px;color:#c8c8c8;transform:scaleX(0.9813);">100.00</div>
<div class="a" style="left:572.6px;top:555.1px;width:2.8px;height:2.8px;border-radius:50%;background:#7a72d2"></div>
<div class="a" style="left:176px;top:605px;width:927px;height:27px;background:#1e1e1e;"></div>
<svg class="a" style="left:187px;top:613px;" width="11" height="11" viewBox="0 0 11 11"><path d="M0 1.32 L5.06 0.77 V5.06 H0 Z M5.94 0.66 L11.00 0 V5.06 H5.94 Z M0 5.94 H5.06 V10.23 L0 9.68 Z M5.94 5.94 H11.00 V11.00 L5.94 10.34 Z" fill="#fff"/></svg>
<svg class="a" style="left:219px;top:612px;" width="12" height="12" viewBox="0 0 12 12"><circle cx="7.20" cy="4.80" r="3.96" fill="none" stroke="#f0f0f0" stroke-width="1.2"/><path d="M4.44 7.68 L0.60 11.40" stroke="#f0f0f0" stroke-width="1.4" stroke-linecap="round"/></svg>
<svg class="a" style="left:252px;top:612px;" width="12" height="12" viewBox="0 0 12 12"><rect x="1.5" y="2.5" width="7" height="7" fill="none" stroke="#eee" stroke-width="1.2"/><path d="M0 1 H10 M0 11 H10 M11 1.5 V3 M11 5 V7 M11 9 V10.5" stroke="#eee" stroke-width="1.2"/></svg>
<div class="a" style="left:275px;top:605px;width:33px;height:25px;background:#2e2e2e;"></div>
<svg class="a" style="left:284px;top:610px;" width="16" height="16" viewBox="0 0 16 16"><defs><linearGradient id="eg1" x1="1" y1="0" x2="0" y2="1"><stop offset="0" stop-color="#5fd48a"/><stop offset="0.45" stop-color="#2aa7e0"/><stop offset="1" stop-color="#0a55a8"/></linearGradient></defs><circle cx="8" cy="8" r="8" fill="url(#eg1)"/><path d="M3 9.5 C3 5.5 6 3.5 9 3.7 C12.5 4 14.5 6.5 14 9 C13.6 10.5 12 10.8 10.5 10.6 C8.8 10.4 8 9.2 8.2 8.2 C6.5 8.5 5.5 11 6.5 13 C4.5 12.5 3 11.3 3 9.5 Z" fill="#1e1e1e" opacity="0.0"/><path d="M9.5 9.2 C11 10.8 13.8 10.5 14.6 8.2 C14.6 12 11.8 15.2 8 15.2 C5 15.2 2.8 13 2.5 10.3 C3.5 12.5 6.2 13.5 8 12.2 C9 11.5 9.3 10.2 9.5 9.2 Z" fill="#1a6fd0"/><ellipse cx="10.6" cy="8.6" rx="2.6" ry="1.7" fill="#2b2b2b"/></svg>
<svg class="a" style="left:317px;top:610px;" width="16" height="16" viewBox="0 0 16 16"><defs><radialGradient id="ff317" cx="0.3" cy="0.3" r="0.8"><stop offset="0" stop-color="#ffbd4f"/><stop offset="0.5" stop-color="#ff6a3d"/><stop offset="1" stop-color="#e22850"/></radialGradient></defs><circle cx="8.00" cy="8.50" r="7.60" fill="url(#ff317)"/><circle cx="8.40" cy="8.40" r="3.60" fill="#7542e5"/><path d="M9.60 1.60 Q14.40 0.00 15.20 7.20 Z" fill="#ffbd4f"/></svg>
<svg class="a" style="left:351px;top:610px;" width="16" height="16" viewBox="0 0 16 16"><path d="M8.00 8.00 L1.07 4.00 A8.00 8.00 0 0 1 14.93 4.00 Z" fill="#dc4a3d"/><path d="M8.00 8.00 L14.93 4.00 A8.00 8.00 0 0 1 8.00 16.00 Z" fill="#f6c026"/><path d="M8.00 8.00 L8.00 16.00 A8.00 8.00 0 0 1 1.07 4.00 Z" fill="#26a65b"/><circle cx="8.00" cy="8.00" r="3.76" fill="#fff"/><circle cx="8.00" cy="8.00" r="2.88" fill="#4a89f3"/></svg>
<svg class="a" style="left:384px;top:611px;" width="15" height="15" viewBox="0 0 15 15"><path d="M0.00 1.80 H5.70 L7.20 3.30 H15.00 V12.75 H0.00 Z" fill="#e8b33c"/><rect x="0" y="4.50" width="15" height="8.25" fill="#f6cf5b"/><rect x="4.50" y="9.30" width="6.00" height="3.30" fill="#3d8fd6"/></svg>
<svg class="a" style="left:417px;top:610px;" width="18" height="18" viewBox="0 0 18 18"><rect x="5" y="1" width="12" height="10" fill="#1d6fc4"/><rect x="0" y="3" width="10" height="10" rx="1" fill="#0a5cb8"/><circle cx="5" cy="8" r="2.7" fill="none" stroke="#fff" stroke-width="1.4"/><rect x="7" y="10" width="11" height="8" fill="#e8c07a"/><path d="M7 10 L12.5 14.5 L18 10" fill="none" stroke="#b9894a" stroke-width="0.8"/></svg>
<div class="a" style="left:442px;top:605px;width:33px;height:25px;background:#3a3a3a;"></div>
<svg class="a" style="left:450px;top:610px;" width="16" height="16" viewBox="0 0 16 16"><rect width="16" height="16" rx="5.12" fill="#4a8cf7"/><rect x="3.20" y="5.28" width="6.72" height="5.44" rx="1.12" fill="#fff"/><path d="M10.24 7.20 L13.12 5.28 V10.72 L13.12 8.80 Z" fill="#fff"/></svg>
<svg class="a" style="left:483px;top:610px;" width="17" height="17" viewBox="0 0 17 17"><rect x="7.65" y="1.36" width="9.35" height="14.28" rx="1" fill="#e8e8e8"/><path d="M9.35 5.10 H15.64 M9.35 8.50 H15.64 M9.35 11.90 H15.64" stroke="#4d82d8" stroke-width="1"/><rect x="0" y="2.55" width="10.54" height="11.90" rx="1" fill="#1d4fa6"/><text x="5.27" y="11.22" font-family="Liberation Sans" font-weight="bold" font-size="7.65" fill="#fff" text-anchor="middle">W</text></svg>
<div class="a" style="left:275px;top:630px;width:33px;height:2px;background:#76a8e0;"></div>
<div class="a" style="left:312px;top:630px;width:27px;height:2px;background:#76a8e0;"></div>
<div class="a" style="left:345px;top:630px;width:27px;height:2px;background:#76a8e0;"></div>
<div class="a" style="left:378px;top:630px;width:28px;height:2px;background:#76a8e0;"></div>
<div class="a" style="left:411px;top:630px;width:28px;height:2px;background:#76a8e0;"></div>
<div class="a" style="left:442px;top:630px;width:33px;height:2px;background:#76a8e0;"></div>
<div class="a" style="left:478px;top:630px;width:27px;height:2px;background:#76a8e0;"></div>
<svg class="a" style="left:922px;top:615px;" width="9" height="6" viewBox="0 0 9 6"><path d="M0.5 5.5 L4.5 1 L8.5 5.5" fill="none" stroke="#eee" stroke-width="1.1"/></svg>
<svg class="a" style="left:938px;top:613px;" width="8" height="11" viewBox="0 0 8 11"><rect x="1.5" y="0" width="5" height="8" rx="2.5" fill="#eee"/><path d="M0.6 5 a3.4 3.4 0 0 0 6.8 0 M4 8.5 V11" fill="none" stroke="#eee" stroke-width="0.9"/></svg>
<svg class="a" style="left:953px;top:614px;" width="12" height="8" viewBox="0 0 12 8"><rect x="2" y="1.5" width="9" height="6" fill="#eee"/><path d="M0 1 h2 M0 4 h2" stroke="#eee" stroke-width="1"/></svg>
<svg class="a" style="left:969px;top:613px;" width="11" height="11" viewBox="0 0 11 11"><rect x="0.5" y="0.5" width="10" height="7.5" fill="none" stroke="#eee"/><path d="M3 10.5 H8 M5.5 8 V10.5" stroke="#eee"/></svg>
<svg class="a" style="left:985px;top:613px;" width="12" height="11" viewBox="0 0 12 11"><path d="M0 4 H2 L5 1 V10 L2 7 H0 Z" fill="#eee"/><path d="M7 3 q1.5 2.5 0 5 M9 1.5 q2.5 4 0 8" fill="none" stroke="#eee" stroke-width="0.9"/></svg>
<div class="t" style="left:1005.00px;top:613.73px;font-size:8px;line-height:8px;color:#e8e8e8;transform:scaleX(0.7493);">ESP</div>
<div class="t" style="left:1036.00px;top:607.93px;font-size:8px;line-height:8px;color:#e8e8e8;transform:scaleX(0.8986);">10:36</div>
<div class="t" style="left:1030.50px;top:620.23px;font-size:8px;line-height:8px;color:#e8e8e8;transform:scaleX(0.9473);">1/6/2022</div>
<svg class="a" style="left:1075px;top:613px;" width="11" height="9" viewBox="0 0 11 9"><path d="M0.5 0.5 H10.5 V6.5 H4 L2 8.5 V6.5 H0.5 Z" fill="#eee"/><path d="M2.5 2.5 H8.5 M2.5 4.5 H8.5" stroke="#1e1e1e" stroke-width="0.8"/></svg>
<div class="a" style="left:1099px;top:605px;width:1px;height:27px;background:#555;"></div>
<svg class="a" style="left:31px;top:636px;" width="25" height="24" viewBox="0 0 25 24"><rect x="8.5" y="1" width="7.5" height="13" rx="3.75" fill="#bdbdbd"/><path d="M5.5 10 a6.75 6.75 0 0 0 13.5 0" fill="none" stroke="#bdbdbd" stroke-width="1.6"/><path d="M12.25 17 V21.5 M8.5 21.7 H16" stroke="#bdbdbd" stroke-width="1.6"/><path d="M1 22.5 L23.5 1.3" stroke="#1a1a1a" stroke-width="3.6"/><path d="M1 22.5 L23.5 1.3" stroke="#d9534f" stroke-width="2"/></svg>
<svg class="a" style="left:69px;top:646px;" width="8" height="5" viewBox="0 0 8 5"><path d="M0.5 4.5 L4 1 L7.5 4.5" fill="none" stroke="#c8c8c8" stroke-width="1.3"/></svg>
<div class="t" style="left:22.60px;top:664.46px;font-size:11.5px;line-height:11.5px;color:#c5c5c5;font-weight:bold;transform:scaleX(0.9460);">Unmute</div>
<svg class="a" style="left:118px;top:636px;" width="25" height="24" viewBox="0 0 25 24"><rect x="1" y="5.5" width="15.5" height="13" rx="2" fill="#bdbdbd"/><path d="M17 9.5 L23 6 V18 L17 14.5 Z" fill="#bdbdbd"/><path d="M1.5 22.5 L23.5 1.3" stroke="#1a1a1a" stroke-width="3.6"/><path d="M1.5 22.5 L23.5 1.3" stroke="#d9534f" stroke-width="2"/></svg>
<svg class="a" style="left:161px;top:646px;" width="8" height="5" viewBox="0 0 8 5"><path d="M0.5 4.5 L4 1 L7.5 4.5" fill="none" stroke="#c8c8c8" stroke-width="1.3"/></svg>
<div class="t" style="left:102.30px;top:664.46px;font-size:11.5px;line-height:11.5px;color:#c5c5c5;font-weight:bold;transform:scaleX(0.9091);">Start Video</div>
<svg class="a" style="left:511px;top:639px;" width="24" height="18" viewBox="0 0 24 18"><circle cx="7.5" cy="4.2" r="4" fill="#bdbdbd"/><path d="M0.5 17 a7 6.5 0 0 1 14 0 Z" fill="#bdbdbd"/><circle cx="17" cy="5.8" r="3.6" fill="#bdbdbd"/><path d="M13 17.3 a5.7 6 0 0 1 11 0 Z" fill="#bdbdbd"/><path d="M14.5 17.3 a7 6.5 0 0 0 0 0" fill="none"/></svg>
<div class="t" style="left:537.70px;top:640.39px;font-size:11px;line-height:11px;color:#c5c5c5;font-weight:bold;transform:scaleX(0.8980);">14</div>
<svg class="a" style="left:568px;top:646px;" width="8" height="5" viewBox="0 0 8 5"><path d="M0.5 4.5 L4 1 L7.5 4.5" fill="none" stroke="#c8c8c8" stroke-width="1.3"/></svg>
<div class="t" style="left:494.00px;top:664.16px;font-size:11.5px;line-height:11.5px;color:#c5c5c5;font-weight:bold;transform:scaleX(0.8872);">Participants</div>
<svg class="a" style="left:611px;top:639px;" width="21" height="18" viewBox="0 0 21 18"><path d="M3 0.5 H17 a3 3 0 0 1 3 3 V10 a3 3 0 0 1 -3 3 H9 L4.5 17 V13 H3 a3 3 0 0 1 -3 -3 V3.5 a3 3 0 0 1 3 -3 Z" fill="#bdbdbd"/></svg>
<div class="a" style="left:623.5px;top:633.5px;width:16px;height:15.5px;border-radius:7px;background:#e5383b;border:1px solid #1a1a1a"></div>
<div class="t" style="left:629.00px;top:637.88px;font-size:9px;line-height:9px;color:#fff;font-weight:bold;transform:scaleX(0.9969);">1</div>
<div class="t" style="left:610.00px;top:664.16px;font-size:11.5px;line-height:11.5px;color:#c5c5c5;font-weight:bold;transform:scaleX(0.8841);">Chat</div>
<div class="a" style="left:693.4px;top:639.4px;width:23px;height:17px;background:#23d959;border-radius:3px"></div>
<svg class="a" style="left:700px;top:643px;" width="10" height="10" viewBox="0 0 10 10"><path d="M5 9.5 V1.5 M1.5 5 L5 1.5 L8.5 5" fill="none" stroke="#111" stroke-width="1.5"/></svg>
<div class="t" style="left:672.20px;top:664.06px;font-size:11.5px;line-height:11.5px;color:#2fce5a;font-weight:bold;transform:scaleX(0.8746);">Share Screen</div>
<svg class="a" style="left:778px;top:638px;" width="20" height="20" viewBox="0 0 20 20"><circle cx="10" cy="10" r="8.6" fill="none" stroke="#bdbdbd" stroke-width="1.5"/><circle cx="10" cy="10" r="6.6" fill="#bdbdbd"/></svg>
<div class="t" style="left:770.70px;top:664.06px;font-size:11.5px;line-height:11.5px;color:#c5c5c5;font-weight:bold;transform:scaleX(0.8606);">Record</div>
<svg class="a" style="left:853px;top:638px;" width="22" height="20" viewBox="0 0 22 20"><circle cx="9.5" cy="10.5" r="8.8" fill="#bdbdbd"/><circle cx="6.7" cy="9.3" r="1.1" fill="#1a1a1a"/><circle cx="12.3" cy="9.3" r="1.1" fill="#1a1a1a"/><path d="M5.8 12.3 q3.7 3.4 7.4 0" fill="none" stroke="#1a1a1a" stroke-width="1.2"/><circle cx="17.3" cy="3.5" r="4" fill="#1a1a1a"/><path d="M17.3 0.8 V6.2 M14.6 3.5 H20" stroke="#bdbdbd" stroke-width="1.4"/></svg>
<div class="t" style="left:839.20px;top:664.06px;font-size:11.5px;line-height:11.5px;color:#c5c5c5;font-weight:bold;transform:scaleX(0.8696);">Reactions</div>
<div class="a" style="left:1212px;top:644.5px;width:57px;height:24.5px;background:#c4272d;border-radius:5px"></div>
<div class="t" style="left:1224.50px;top:650.34px;font-size:12px;line-height:12px;color:#ffffff;font-weight:bold;transform:scaleX(0.8815);">Leave</div>
<div class="t" style="left:971.30px;top:612.50px;font-size:16.3px;line-height:16.3px;color:rgba(190,190,190,0.55);transform:scaleX(1.1426);">Activar Windows</div>
<div class="t" style="left:971.30px;top:634.62px;font-size:13.8px;line-height:13.8px;color:rgba(190,190,190,0.55);">Ve a Configuración para activar Windows.</div>
<div class="a" style="left:0px;top:681.5px;width:1280px;height:37.5px;background:#111111;"></div>
<svg class="a" style="left:15px;top:693px;" width="15.5" height="15.5" viewBox="0 0 15.5 15.5"><path d="M0 1.86 L7.13 1.09 V7.13 H0 Z M8.37 0.93 L15.50 0 V7.13 H8.37 Z M0 8.37 H7.13 V14.41 L0 13.64 Z M8.37 8.37 H15.50 V15.50 L8.37 14.57 Z" fill="#fff"/></svg>
<svg class="a" style="left:60px;top:693px;" width="15.5" height="15.5" viewBox="0 0 15.5 15.5"><circle cx="9.30" cy="6.20" r="5.12" fill="none" stroke="#fff" stroke-width="1.5"/><path d="M5.74 9.92 L0.78 14.72" stroke="#fff" stroke-width="1.7" stroke-linecap="round"/></svg>
<svg class="a" style="left:105px;top:689.5px;" width="21.5" height="21.5" viewBox="0 0 21.5 21.5"><path d="M10.75 10.75 L1.44 5.37 A10.75 10.75 0 0 1 20.06 5.37 Z" fill="#dc4a3d"/><path d="M10.75 10.75 L20.06 5.37 A10.75 10.75 0 0 1 10.75 21.50 Z" fill="#f6c026"/><path d="M10.75 10.75 L10.75 21.50 A10.75 10.75 0 0 1 1.44 5.37 Z" fill="#26a65b"/><circle cx="10.75" cy="10.75" r="5.05" fill="#fff"/><circle cx="10.75" cy="10.75" r="3.87" fill="#4a89f3"/></svg>
<svg class="a" style="left:150.5px;top:691.5px;" width="21" height="17.5" viewBox="0 0 21 17.5"><path d="M0.5 1.5 a1 1 0 0 1 1 -1 H7 L8.5 2 H20 V4 H0.5 Z" fill="#e0a92e"/><rect x="0.5" y="3" width="20" height="13.5" fill="#f8cf5e"/><path d="M4.5 16.5 V10 H16 V16.5 H13 V12.5 H7.5 V16.5 Z" fill="#3b86cf"/></svg>
<svg class="a" style="left:195.5px;top:689.5px;" width="23.5" height="21.5" viewBox="0 0 23.5 21.5"><path d="M0 7.5 L11.75 0 L23.5 7.5 Z" fill="#0e62b1"/><rect x="0" y="7.5" width="23.5" height="14" fill="#2ba1e4"/><path d="M0 21.5 L11.75 13 L23.5 21.5 Z" fill="#1f8fd8"/><path d="M2.5 7.5 H21 L11.75 13.5 Z" fill="#fff"/></svg>
<div class="a" style="left:230.5px;top:681.5px;width:42px;height:37.5px;background:#2b2b2b;"></div>
<div class="a" style="left:274px;top:681.5px;width:1px;height:37.5px;background:#2a2a2a;"></div>
<svg class="a" style="left:242.4px;top:689.6px;" width="21.3" height="21.3" viewBox="0 0 21.3 21.3"><rect width="21.3" height="21.3" rx="6.82" fill="#4a8cf7"/><rect x="4.26" y="7.03" width="8.95" height="7.24" rx="1.49" fill="#fff"/><path d="M13.63 9.59 L17.47 7.03 V14.27 L17.47 11.72 Z" fill="#fff"/></svg>
<svg class="a" style="left:287.7px;top:689.8px;" width="21.8" height="21.8" viewBox="0 0 21.8 21.8"><rect x="12.64" y="2.62" width="9.16" height="16.13" fill="#f4f4f4"/><path d="M13.95 6.10 H20.49 M13.95 9.37 H20.49 M13.95 12.64 H20.49 M13.95 15.70 H20.49" stroke="#8faee0" stroke-width="1.1"/><path d="M0 2.18 L14.39 0 V21.80 L0 19.62 Z" fill="#2b579a"/><text x="7.19" y="13.95" font-family="Liberation Sans" font-weight="bold" font-size="9.16" fill="#fff" text-anchor="middle">W</text></svg>
<svg class="a" style="left:333.7px;top:689.8px;" width="21.8" height="21.8" viewBox="0 0 21.8 21.8"><rect x="12.64" y="2.62" width="9.16" height="16.13" fill="#f4f4f4"/><path d="M13.95 6.10 H20.49 M13.95 9.37 H20.49 M13.95 12.64 H20.49 M13.95 15.70 H20.49" stroke="#8fcfa8" stroke-width="1.1"/><path d="M0 2.18 L14.39 0 V21.80 L0 19.62 Z" fill="#207245"/><text x="7.19" y="13.95" font-family="Liberation Sans" font-weight="bold" font-size="9.16" fill="#fff" text-anchor="middle">X</text></svg>
<svg class="a" style="left:379.5px;top:689.8px;" width="21.8" height="21.8" viewBox="0 0 21.8 21.8"><rect x="12.64" y="2.62" width="9.16" height="16.13" fill="#f4f4f4"/><path d="M13.95 6.10 H20.49 M13.95 9.37 H20.49 M13.95 12.64 H20.49 M13.95 15.70 H20.49" stroke="#f1a58c" stroke-width="1.1"/><path d="M0 2.18 L14.39 0 V21.80 L0 19.62 Z" fill="#d24726"/><text x="7.19" y="13.95" font-family="Liberation Sans" font-weight="bold" font-size="9.16" fill="#fff" text-anchor="middle">P</text></svg>
<svg class="a" style="left:426px;top:689.4px;" width="22.5" height="21.6" viewBox="0 0 22.5 21.6"><defs><linearGradient id="tb1" x1="0" y1="0" x2="1" y2="1"><stop offset="0" stop-color="#62b4f5"/><stop offset="1" stop-color="#1b5fc2"/></linearGradient></defs><circle cx="11.5" cy="10.8" r="10.8" fill="url(#tb1)"/><path d="M1.5 10 L10 13.5 L17 9 V17.5 C12 20 6 19 1.5 15 Z" fill="#f4f7fb"/><path d="M1.5 10 C5 5 11 4.5 17 9 L10 13.5 Z" fill="#cfdff2"/></svg>
<svg class="a" style="left:471.5px;top:689.5px;" width="21.5" height="21.5" viewBox="0 0 21.5 21.5"><path d="M10.75 10.75 L1.44 5.37 A10.75 10.75 0 0 1 20.06 5.37 Z" fill="#dc4a3d"/><path d="M10.75 10.75 L20.06 5.37 A10.75 10.75 0 0 1 10.75 21.50 Z" fill="#f6c026"/><path d="M10.75 10.75 L10.75 21.50 A10.75 10.75 0 0 1 1.44 5.37 Z" fill="#26a65b"/><circle cx="10.75" cy="10.75" r="5.05" fill="#fff"/><circle cx="10.75" cy="10.75" r="3.87" fill="#4a89f3"/></svg>
<div class="a" style="left:484px;top:700px;width:12px;height:12px;border-radius:50%;background:#2b2520"></div>
<div class="a" style="left:487px;top:702px;width:6px;height:7px;border-radius:50%;background:#c9a58e"></div>
<svg class="a" style="left:518px;top:690.3px;" width="20.5" height="19.7" viewBox="0 0 20.5 19.7"><rect width="20.5" height="19.7" rx="3" fill="#c4161c"/><path d="M4 15 C7 13 9 9 9.8 4.5 C10.1 3 11 3.5 10.8 5 C10.5 8 12.5 12 16.5 13 C12 12.8 7.5 13.5 4 15 Z" fill="none" stroke="#fff" stroke-width="1.5" stroke-linejoin="round"/></svg>
<svg class="a" style="left:565.7px;top:692.2px;" width="17.3" height="16.8" viewBox="0 0 17.3 16.8"><path d="M7.2 0 H10.1 L10.6 2.4 L12.4 3.2 L14.5 1.9 L16.5 3.9 L15.1 6 L15.8 7.7 L17.3 8 V10.1 L15.8 10.4 L15.1 12.1 L16.5 14.2 L14.4 16.2 L12.3 14.8 L10.6 15.5 L10.1 16.8 H7.2 L6.8 15.5 L5 14.8 L2.9 16.2 L0.9 14.2 L2.3 12.1 L1.6 10.4 L0 10.1 V8 L1.6 7.7 L2.3 6 L0.9 3.9 L2.9 1.9 L5 3.2 L6.8 2.4 Z" fill="#fff"/><circle cx="8.65" cy="8.4" r="3.6" fill="#111"/></svg>
<svg class="a" style="left:609.8px;top:689.4px;" width="21.6" height="21.6" viewBox="0 0 21.6 21.6"><defs><linearGradient id="fxb" x1="0" y1="0" x2="0.3" y2="1"><stop offset="0" stop-color="#56c2f2"/><stop offset="1" stop-color="#153f8f"/></linearGradient><linearGradient id="fxo" x1="0" y1="0" x2="1" y2="0.3"><stop offset="0" stop-color="#e9592a"/><stop offset="0.6" stop-color="#f07a2a"/><stop offset="1" stop-color="#ffd43a"/></linearGradient></defs><circle cx="10.8" cy="11.2" r="10.2" fill="url(#fxo)"/><circle cx="12.2" cy="9.6" r="7.2" fill="url(#fxb)"/><path d="M1.5 7.5 C3 4 5 3 6.5 4.5 C8.5 6.5 9 9 8.2 11.2 C9 13.5 11.5 14.8 14.5 14.2 C12.5 17.5 7 18 4 15 C1.8 12.8 1.2 10 1.5 7.5 Z" fill="#ea6a2c"/><path d="M17.5 3.5 C20 5.5 21 8.5 20.8 11.5 C20.5 15 18.5 17.5 16 19 C18.5 15.5 19.2 11 17.5 3.5 Z" fill="#ffcf3a"/></svg>
<div class="a" style="left:142.5px;top:717px;width:37.5px;height:2px;background:#76b9ed;"></div>
<div class="a" style="left:230.5px;top:717px;width:42.0px;height:2px;background:#76b9ed;"></div>
<div class="a" style="left:280px;top:717px;width:37.5px;height:2px;background:#76b9ed;"></div>
<div class="a" style="left:463.75px;top:717px;width:37.25px;height:2px;background:#76b9ed;"></div>
<div class="a" style="left:510px;top:717px;width:37px;height:2px;background:#76b9ed;"></div>
<div class="a" style="left:556px;top:717px;width:37px;height:2px;background:#76b9ed;"></div>
<div class="a" style="left:601px;top:717px;width:37px;height:2px;background:#76b9ed;"></div>
<svg class="a" style="left:1092px;top:696px;" width="12" height="8" viewBox="0 0 12 8"><path d="M0.7 7 L6 1.5 L11.3 7" fill="none" stroke="#fff" stroke-width="1.3"/></svg>
<svg class="a" style="left:1114px;top:693px;" width="12" height="15" viewBox="0 0 12 15"><rect x="3" y="0" width="6" height="10" rx="3" fill="#fff"/><path d="M0.8 7 a5.2 5.2 0 0 0 10.4 0 M6 12.3 V14.5 M3.5 14.5 H8.5" fill="none" stroke="#fff" stroke-width="1.1"/></svg>
<div class="t" style="left:1138.70px;top:694.06px;font-size:11.5px;line-height:11.5px;color:#ffffff;transform:scaleX(0.7473);">ESP</div>
<div class="t" style="left:1171.70px;top:686.06px;font-size:11.5px;line-height:11.5px;color:#ffffff;transform:scaleX(0.9036);">10:37 a. m.</div>
<div class="t" style="left:1170.00px;top:703.26px;font-size:11.5px;line-height:11.5px;color:#ffffff;transform:scaleX(0.9485);">01/06/2022</div>
<svg class="a" style="left:1241px;top:692.5px;" width="17" height="14" viewBox="0 0 17 14"><path d="M0.6 0.6 H16.4 V10 H6 L3 13.3 V10 H0.6 Z" fill="#fff"/><path d="M3.5 3.5 H13.5 M3.5 6.5 H13.5" stroke="#111" stroke-width="1"/></svg>
<div class="a" style="left:1248px;top:700px;width:16px;height:15.5px;border-radius:50%;background:#2a2a2a;border:1.2px solid #777"></div>
<div class="t" style="left:1253.00px;top:703.53px;font-size:10px;line-height:10px;color:#fff;transform:scaleX(1.0787);">3</div>
<div class="a" style="left:1275.5px;top:681.5px;width:1px;height:37.5px;background:#444;"></div>
</body></html>
